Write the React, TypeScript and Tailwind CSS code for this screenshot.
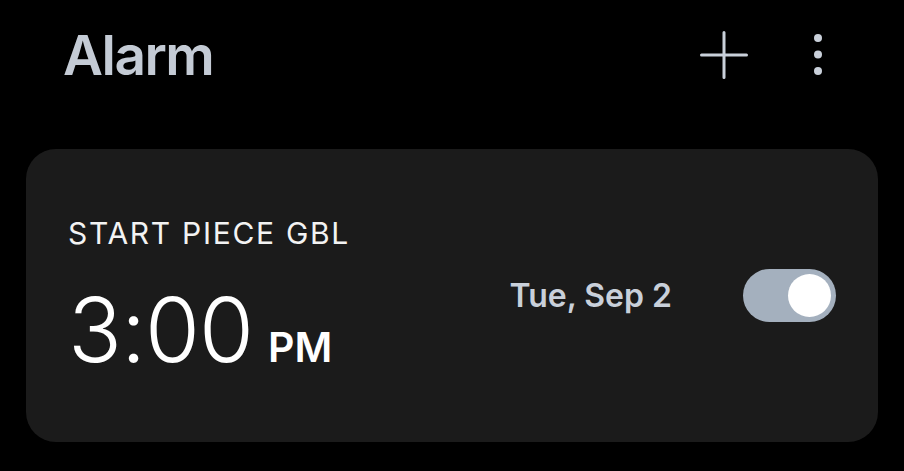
export default function App() {
  return (
    <div className="min-h-[471px] w-[904px] bg-black font-['Inter','Noto_Sans',sans-serif]">
      <header className="flex h-[110px] items-center pl-[63px] pr-[82px]">
        <h1 className="flex-1 text-[55px] font-semibold leading-none tracking-[-1.5px] text-[#c4cbd5]">Alarm</h1>
        <button className="h-[48px] w-[48px]" aria-label="Add alarm">
          <svg viewBox="0 0 48 48" className="h-[48px] w-[48px]" fill="none" stroke="#c9d0da" strokeWidth="3" strokeLinecap="round">
            <path d="M24 1.5v45M1.5 24h45" />
          </svg>
        </button>
        <button className="ml-[66px] h-[42px] w-[8px]" aria-label="More options">
          <svg viewBox="0 0 8 42" className="h-[42px] w-[8px]" fill="#c9d0da">
            <circle cx="4" cy="4" r="4" />
            <circle cx="4" cy="20.5" r="4" />
            <circle cx="4" cy="37" r="4" />
          </svg>
        </button>
      </header>

      <section className="mx-[26px] mt-[39px] flex h-[293px] items-center justify-between rounded-[30px] bg-[#1b1b1b] pl-[42px] pr-[42px]">
        <div className="flex flex-col">
          <div className="text-[30px] leading-none tracking-[1.7px] text-[#f3f3f3]">START PIECE GBL</div>
          <div className="mt-[37px] flex items-baseline text-white">
            <span className="text-[89px] font-light leading-none tracking-[-1px]">3:00</span>
            <span className="ml-[15px] text-[41px] font-semibold leading-none">PM</span>
          </div>
        </div>

        <div className="flex items-center">
          <span className="text-[32px] font-semibold leading-none text-[#c9d0da]">Tue, Sep 2</span>
          <div className="ml-[71px] flex h-[53px] w-[93px] items-center justify-end rounded-full bg-[#a4b0be] pr-[5px]">
            <div className="h-[43px] w-[43px] rounded-full bg-white" />
          </div>
        </div>
      </section>
    </div>
  );
}
